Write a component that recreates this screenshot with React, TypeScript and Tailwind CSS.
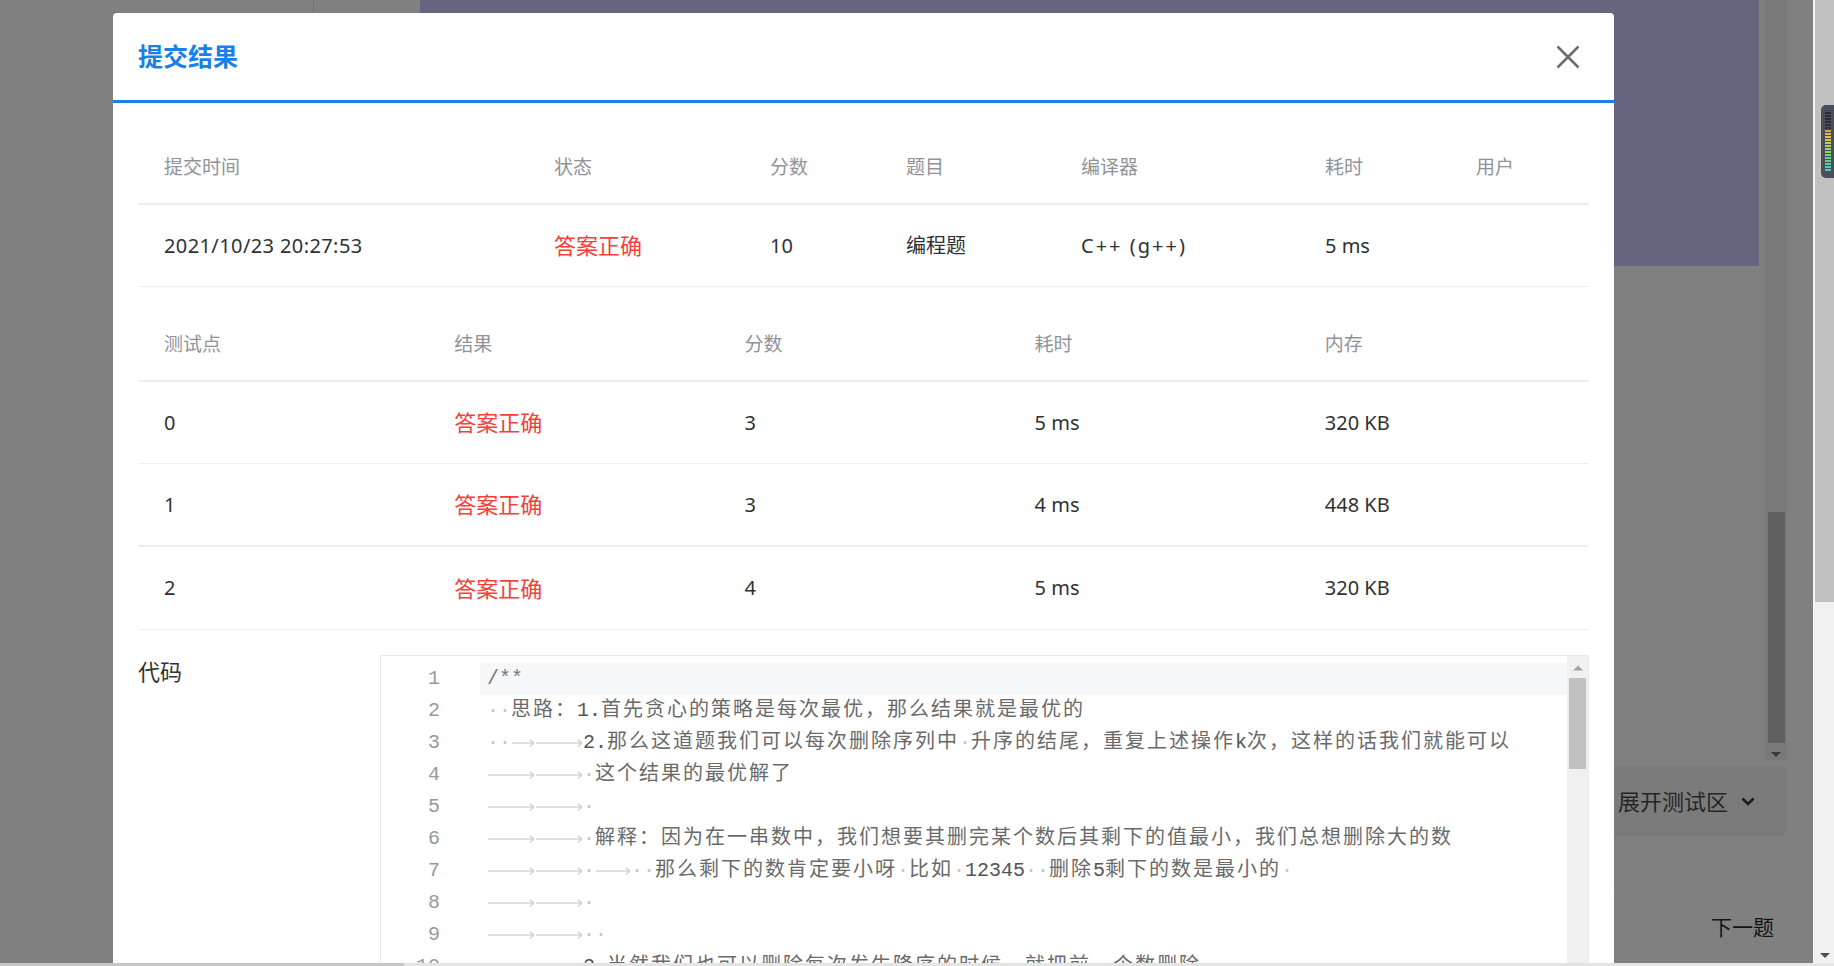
import React from 'react';

const ui = "font-['Noto_Sans','Noto_Sans_CJK_SC',sans-serif]";
const mono = "font-['Liberation_Mono','Noto_Sans_CJK_SC',monospace]";

const codeLines: string[] = [
  '/**',
  '  思路：1.首先贪心的策略是每次最优，那么结果就是最优的',
  '  \t\t2.那么这道题我们可以每次删除序列中 升序的结尾，重复上述操作k次，这样的话我们就能可以',
  '\t\t 这个结果的最优解了',
  '\t\t ',
  '\t\t 解释：因为在一串数中，我们想要其删完某个数后其剩下的值最小，我们总想删除大的数',
  '\t\t \t  那么剩下的数肯定要小呀 比如 12345  删除5剩下的数是最小的 ',
  '\t\t ',
  '\t\t  ',
  '\t\t2.当然我们也可以删除每次发生降序的时候，就把前一个数删除\t\t\t',
];

function TabArrow({ w }: { w: number }) {
  return (
    <svg width={w} height={32} className="inline-block align-top">
      <line x1={1} y1={16} x2={w - 2} y2={16} stroke="#e0e0e0" strokeWidth={2} />
      <path d={`M${w - 5} 12.5 L${w - 1.5} 16 L${w - 5} 19.5`} fill="none" stroke="#c8c8c8" strokeWidth={1.2} />
    </svg>
  );
}

function renderLine(s: string, first: boolean) {
  const out: React.ReactNode[] = [];
  let pos = 0;
  let buf = '';
  let bufType: 'cjk' | 'lat' | null = null;
  const flush = () => {
    if (buf) {
      out.push(
        <span
          key={out.length}
          className={bufType === 'cjk' ? 'tracking-[2px] text-[#6a6a6a]' : first ? 'text-[#7a7a7a]' : 'text-[#555]'}
        >
          {buf}
        </span>
      );
    }
    buf = '';
    bufType = null;
  };
  for (const ch of s) {
    if (ch === '\t') {
      flush();
      const w = 48 - (pos % 48);
      out.push(<TabArrow key={out.length} w={w} />);
      pos += w;
    } else if (ch === ' ') {
      flush();
      out.push(
        <span key={out.length} className="inline-block w-[12px] text-center text-[#c6c6c6]">
          ·
        </span>
      );
      pos += 12;
    } else {
      const t: 'cjk' | 'lat' = ch.charCodeAt(0) > 0x2e80 ? 'cjk' : 'lat';
      if (t !== bufType) flush();
      bufType = t;
      buf += ch;
      pos += t === 'cjk' ? 22 : 12;
    }
  }
  flush();
  return out;
}

const t1Widths = ['w-[390px]', 'w-[216px]', 'w-[136px]', 'w-[175px]', 'w-[244px]', 'w-[151px]', 'w-[139px]'];
const t1Head = ['提交时间', '状态', '分数', '题目', '编译器', '耗时', '用户'];

const testRows = [
  ['0', '3', '5 ms', '320 KB'],
  ['1', '3', '4 ms', '448 KB'],
  ['2', '4', '5 ms', '320 KB'],
];

const rowClasses = [
  'h-[82px] border-b border-[#ebeef5]',
  'h-[83px] border-b-2 border-[#ebeef5]',
  'h-[83px] border-b border-[#ebeef5]',
];

const widgetBars = [
  '#2b2d34', '#2b2d34', '#2b2d34', '#2e3038', '#30323a', '#32343c',
  '#d9a546', '#dcb24a', '#d8bd4b', '#cfc54e', '#c2cb52', '#b1ce57',
  '#9fd05e', '#8cd267', '#7ad271', '#68d27f', '#5ad18f', '#50cfa0', '#4acdb0', '#47cbbd',
];

export default function App() {
  return (
    <div className={`relative w-[1834px] h-[966px] overflow-hidden bg-[#808080] flex flex-col ${ui}`}>
      {/* background page */}
      <div className="flex h-[963px]">
        <div className="w-[420px] shrink-0">
          <div className="w-[314px] h-[13px] border-r border-[#727272]" />
        </div>
        <div className="w-[1367px] shrink-0 flex flex-col">
          <div className="h-[760px] flex">
            <div className="w-[1345px] pr-[6px]">
              <div className="h-[266px] bg-[#656580]" />
            </div>
            <div className="w-[22px] bg-[#7a7a7a] flex flex-col items-center pt-[512px]">
              <div className="w-[17px] h-[231px] bg-[#5f5f5f]" />
              <svg width="10" height="6" className="mt-[9px]">
                <path d="M0 0 L10 0 L5 5 Z" fill="#3a3a3a" />
              </svg>
            </div>
          </div>
          <div className="mt-[6px] h-[70px] bg-[#7b7b7b] rounded-br-[6px] flex items-center justify-end pr-[31px] gap-[12px] text-[22px] text-[#262626]">
            <span>展开测试区</span>
            <svg width="16" height="16" viewBox="0 0 16 16">
              <path d="M2.5 5.5 L8 11 L13.5 5.5" fill="none" stroke="#1e1e1e" strokeWidth="2.6" />
            </svg>
          </div>
          <div className="flex-1 border-t border-[#848484] mt-[52px] flex justify-end pr-[13px] pt-[22px]">
            <span className="text-[21px] leading-[32px] text-[#151515]">下一题</span>
          </div>
        </div>
        <div className="w-[26px] shrink-0" />
        <div className="w-[2px] shrink-0 bg-[#f4f4f4]" />
        <div className="relative w-[19px] shrink-0 bg-[#f1f1f1] flex flex-col">
          <div className="h-[602px] bg-[#c1c1c1]" />
          <div className="flex-1" />
          <div className="h-[14px] flex items-center justify-center">
            <svg width="10" height="6">
              <path d="M0 0 L10 0 L5 5 Z" fill="#505050" />
            </svg>
          </div>
          <div className="absolute left-[6px] top-[105px] w-[13px] h-[73px] bg-[#4a4e5b] rounded-l-[5px] flex flex-col gap-[1px] pl-[4px] pt-[7px]">
            {widgetBars.map((c, i) => (
              <div key={i} className="w-[6px] h-[2px]" style={{ backgroundColor: c }} />
            ))}
          </div>
        </div>
      </div>
      <div className="relative z-10 h-[3px] flex">
        <div className="w-[404px] bg-[#c6c6c6]" />
        <div className="flex-1 bg-[#e4e4e4]" />
      </div>

      {/* modal */}
      <div className="absolute left-[113px] top-[13px] w-[1501px] h-[1000px] bg-white rounded-t-[4px]">
        <div className="h-[90px] flex items-center justify-between pl-[25px] pr-[34px] border-b-[3px] border-[#1a80e8]">
          <span className="text-[25px] font-bold text-[#1a7fe6]">提交结果</span>
          <svg width="24" height="24" viewBox="0 0 24 24">
            <path d="M1.5 1.5 L22.5 22.5 M22.5 1.5 L1.5 22.5" stroke="#6e6e6e" strokeWidth="2.6" />
          </svg>
        </div>
        <div className="px-[25px] pt-[29px]">
          {/* submission table */}
          <div className="w-[1451px]">
            <div className="h-[73px] flex items-center border-b-2 border-[#ebeef5] text-[19px] text-[#909399]">
              {t1Head.map((h, i) => (
                <div key={i} className={`${t1Widths[i]} pl-[26px]`}>
                  {h}
                </div>
              ))}
            </div>
            <div className="h-[82px] flex items-center border-b border-[#ebeef5] text-[20px] text-[#303133]">
              <div className={`${t1Widths[0]} pl-[26px] tracking-[0.4px]`}>2021/10/23 20:27:53</div>
              <div className={`${t1Widths[1]} pl-[26px] text-[22px] text-[#f5403a]`}>答案正确</div>
              <div className={`${t1Widths[2]} pl-[26px]`}>10</div>
              <div className={`${t1Widths[3]} pl-[26px]`}>编程题</div>
              <div className={`${t1Widths[4]} pl-[26px] tracking-[2px]`}>C++ (g++)</div>
              <div className={`${t1Widths[5]} pl-[26px]`}>5 ms</div>
              <div className={`${t1Widths[6]} pl-[26px]`} />
            </div>
          </div>

          {/* test points table */}
          <div className="w-[1451px] mt-[22px]">
            <div className="h-[73px] grid grid-cols-5 items-center border-b-2 border-[#ebeef5] text-[19px] text-[#909399]">
              <div className="pl-[26px]">测试点</div>
              <div className="pl-[26px]">结果</div>
              <div className="pl-[26px]">分数</div>
              <div className="pl-[26px]">耗时</div>
              <div className="pl-[26px]">内存</div>
            </div>
            {testRows.map((r, i) => (
              <div key={i} className={`${rowClasses[i]} grid grid-cols-5 items-center text-[20px] text-[#303133]`}>
                <div className="pl-[26px]">{r[0]}</div>
                <div className="pl-[26px] text-[22px] text-[#f5403a]">答案正确</div>
                <div className="pl-[26px]">{r[1]}</div>
                <div className="pl-[26px]">{r[2]}</div>
                <div className="pl-[26px]">{r[3]}</div>
              </div>
            ))}
          </div>

          {/* code */}
          <div className="mt-[25px] flex w-[1451px]">
            <div className="w-[242px] shrink-0 text-[22px] leading-[32px] text-[#333]">代码</div>
            <div className={`w-[1209px] h-[340px] border border-[#e9e9e9] flex overflow-hidden ${mono} text-[20px]`}>
              <div className="w-[99px] shrink-0 pt-[7px] pr-[40px] text-right text-[#999]">
                {codeLines.map((_, i) => (
                  <div key={i} className="h-[32px] leading-[32px]">
                    {i + 1}
                  </div>
                ))}
              </div>
              <div className="flex-1 pt-[7px] overflow-hidden">
                {codeLines.map((l, i) => (
                  <div
                    key={i}
                    className={`h-[32px] leading-[32px] whitespace-pre pl-[7px] ${i === 0 ? 'bg-[#f6f7f9]' : ''}`}
                  >
                    {renderLine(l, i === 0)}
                  </div>
                ))}
              </div>
              <div className="w-[21px] shrink-0 bg-[#f0f0f0] flex flex-col items-center">
                <svg width="10" height="6" className="mt-[9px]">
                  <path d="M0 5.5 L10 5.5 L5 0.5 Z" fill="#a3a3a3" />
                </svg>
                <div className="mt-[7px] w-[17px] h-[91px] bg-[#c1c1c1]" />
              </div>
            </div>
          </div>
        </div>
      </div>
    </div>
  );
}
